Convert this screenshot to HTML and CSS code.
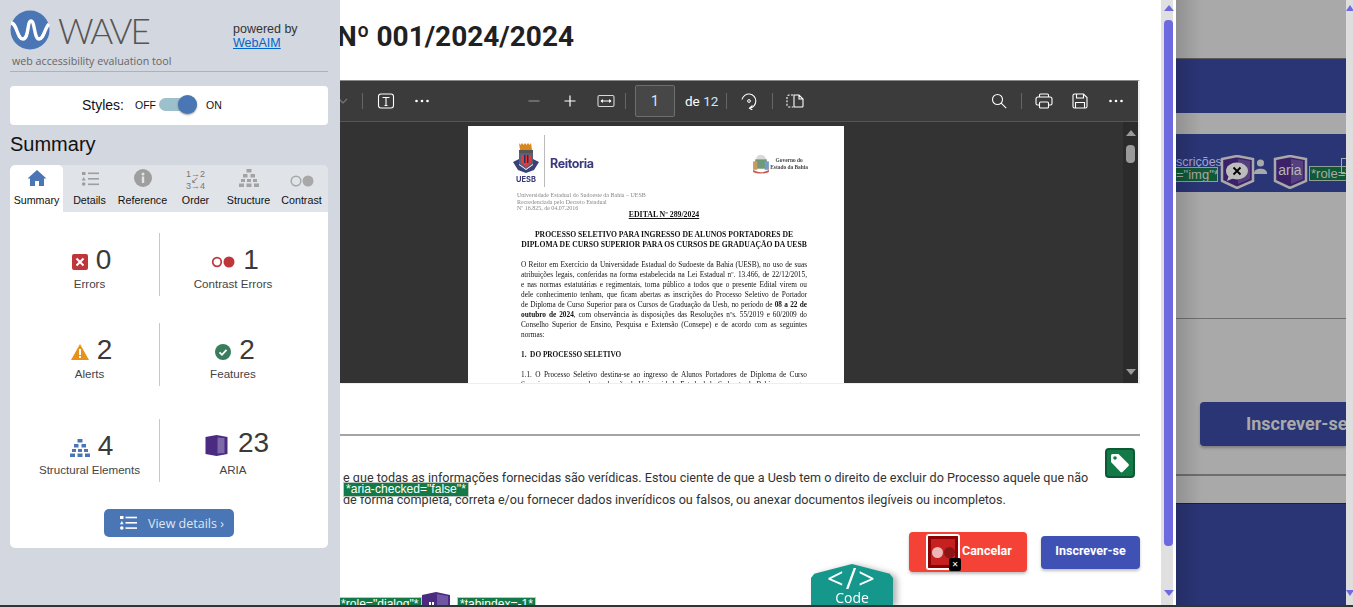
FILE: index.html
```html
<!DOCTYPE html>
<html lang="pt-BR">
<head>
  <meta charset="UTF-8" />
  <meta name="viewport" content="width=device-width, initial-scale=1.0" />
  <title>Edital - WAVE</title>
  <link rel="stylesheet" href="styles.css">
</head>
<body>
<div class="screen">

  <!-- page dialog, runs under the wave sidebar -->
  <main class="dialog">
    <h1 class="title">Nº 001/2024/2024</h1>

    <section class="viewer">
      <div class="pdf-bar">
        <svg class="ico chevron" width="10" height="10" viewBox="0 0 10 10"><path d="M1 3l4 4 4-4" fill="none" stroke="#777" stroke-width="1.2"/></svg>
        <span class="bar-sep sep-a"></span>
        <svg class="ico ico-text" width="18" height="18" viewBox="0 0 18 18"><rect x="1.5" y="2" width="15" height="14" rx="2.5" fill="none" stroke="#fff" stroke-width="1.1"/><path d="M5.5 5.5h7M9 5.5v8M7.5 13.5h3" fill="none" stroke="#fff" stroke-width="1.1"/></svg>
        <svg class="ico ico-more" width="16" height="4" viewBox="0 0 16 4"><circle cx="2.5" cy="2" r="1.3" fill="#fff"/><circle cx="8" cy="2" r="1.3" fill="#fff"/><circle cx="13.5" cy="2" r="1.3" fill="#fff"/></svg>

        <svg class="ico ico-minus" width="14" height="14" viewBox="0 0 14 14"><path d="M1.5 7h11" stroke="#8d8d8d" stroke-width="1.2"/></svg>
        <svg class="ico ico-plus" width="14" height="14" viewBox="0 0 14 14"><path d="M1.5 7h11M7 1.5v11" stroke="#fff" stroke-width="1.2"/></svg>
        <svg class="ico ico-fit" width="18" height="14" viewBox="0 0 18 14"><rect x="1" y="1.5" width="16" height="11" rx="1.5" fill="none" stroke="#d8d8d8" stroke-width="1.1"/><path d="M4 7h10" stroke="#fff" stroke-width="1"/><path d="M3.5 7l2.4-2v4zM14.5 7l-2.4-2v4z" fill="#fff"/></svg>
        <span class="bar-sep sep-b"></span>
        <span class="page-box">1</span>
        <span class="page-total">de <span class="page-num">12</span></span>
        <span class="bar-sep sep-c"></span>
        <svg class="ico ico-rotate" width="18" height="18" viewBox="0 0 18 18"><path d="M2 7.5A7 7 0 1 1 9.5 16" fill="none" stroke="#fff" stroke-width="1.1"/><path d="M12.5 13.5l-3 2.6 2.8 1.9" fill="none" stroke="#fff" stroke-width="1.1"/><circle cx="9" cy="9" r="1.4" fill="none" stroke="#fff"/></svg>
        <span class="bar-sep sep-d"></span>
        <svg class="ico ico-split" width="18" height="14" viewBox="0 0 18 14"><path d="M7 1H3a2 2 0 0 0-2 2v8a2 2 0 0 0 2 2h4" fill="none" stroke="#fff" stroke-width="1.1" stroke-dasharray="2 1.4"/><path d="M8 1h5l4 4v7a1 1 0 0 1-1 1H8zM13 1v4h4" fill="none" stroke="#fff" stroke-width="1.1"/></svg>

        <svg class="ico ico-search" width="16" height="16" viewBox="0 0 16 16"><circle cx="6.5" cy="6.5" r="5" fill="none" stroke="#fff" stroke-width="1.1"/><path d="M10.2 10.2l5 5" stroke="#fff" stroke-width="1.1"/></svg>
        <span class="bar-sep sep-e"></span>
        <svg class="ico ico-print" width="18" height="16" viewBox="0 0 18 16"><path d="M4.5 4V2a1 1 0 0 1 1-1h7a1 1 0 0 1 1 1v2" fill="none" stroke="#fff" stroke-width="1.1"/><path d="M4.5 12h-2A1.5 1.5 0 0 1 1 10.5V6a2 2 0 0 1 2-2h12a2 2 0 0 1 2 2v4.5a1.5 1.5 0 0 1-1.5 1.5h-2" fill="none" stroke="#fff" stroke-width="1.1"/><rect x="4.5" y="9" width="9" height="6" rx="1" fill="none" stroke="#fff" stroke-width="1.1"/></svg>
        <svg class="ico ico-save" width="16" height="16" viewBox="0 0 16 16"><path d="M1 2.5A1.5 1.5 0 0 1 2.5 1h9L15 4.5v9a1.5 1.5 0 0 1-1.5 1.5h-11A1.5 1.5 0 0 1 1 13.5z" fill="none" stroke="#fff" stroke-width="1.1"/><path d="M4.5 1v4h7V1M3.5 15V9.5h9V15" fill="none" stroke="#fff" stroke-width="1.1"/></svg>
        <svg class="ico ico-more-r" width="16" height="4" viewBox="0 0 16 4"><circle cx="2.5" cy="2" r="1.3" fill="#fff"/><circle cx="8" cy="2" r="1.3" fill="#fff"/><circle cx="13.5" cy="2" r="1.3" fill="#fff"/></svg>
      </div>

      <div class="pdf-body">
        <article class="pdf-page">
          <header class="doc-head">
            <div class="crest-col">
              <svg width="26" height="34" viewBox="0 0 26 32">
                <path d="M6 1l1.5 2L9 1l1.5 2L12 1l1.5 2L15 1l1.5 2L18 1l1 7H7z" fill="#d9861f"/>
                <rect x="6" y="8" width="14" height="3" fill="#555"/>
                <path d="M6 11h14v11l-7 5-7-5z" fill="#5a5f7a"/>
                <path d="M8 13h10v8l-5 4-5-4z" fill="#e03a3a"/>
                <path d="M11 13h1.5v8H11zM14 13h1.5v8H14z" fill="#26305f"/>
                <path d="M0 20l6-3v6l7 5 7-5v-6l6 3-5 8-8 3-8-3z" fill="#39407a"/>
              </svg>
              <span class="uesb">UESB</span>
            </div>
            <span class="doc-sep"></span>
            <span class="reitoria">Reitoria</span>
            <div class="gov">
              <svg width="18" height="20" viewBox="0 0 17 19">
                <path d="M8 1c4 0 5 2 5 4H4c0-2 1-4 4-4z" fill="#d9d9d9"/>
                <rect x="3" y="5" width="11" height="9" fill="#6f9a7a"/>
                <rect x="1" y="7" width="4" height="8" fill="#c99a5a"/>
                <rect x="12" y="7" width="4" height="8" fill="#7a9ac0"/>
                <path d="M1 15c4 3 11 3 15 0v2c-4 2-11 2-15 0z" fill="#c25a4e"/>
              </svg>
              <span class="gov-name">Governo do<br>Estado da Bahia</span>
            </div>
          </header>
          <p class="doc-grey">Universidade Estadual do Sudoeste da Bahia – UESB<br>Recredenciada pelo Decreto Estadual<br>Nº 16.825, de 04.07.2016</p>
          <p class="doc-edital">EDITAL Nº 289/2024</p>
          <p class="doc-caption">PROCESSO SELETIVO PARA INGRESSO DE ALUNOS PORTADORES DE<br>DIPLOMA DE CURSO SUPERIOR PARA OS CURSOS DE GRADUAÇÃO DA UESB</p>
          <div class="doc-text">
            <p class="just">O Reitor em Exercício da Universidade Estadual do Sudoeste da Bahia (UESB), no uso de suas</p>
            <p class="just">atribuições legais, conferidas na forma estabelecida na Lei Estadual nº. 13.466, de 22/12/2015,</p>
            <p class="just">e nas normas estatutárias e regimentais, torna público a todos que o presente Edital virem ou</p>
            <p class="just">dele conhecimento tenham, que ficam abertas as inscrições do Processo Seletivo de Portador</p>
            <p class="just">de Diploma de Curso Superior para os Cursos de Graduação da Uesb, no período de <b>08 a 22 de</b></p>
            <p class="just"><b>outubro de 2024</b>, com observância às disposições das Resoluções nºs. 55/2019 e 60/2009 do</p>
            <p class="just">Conselho Superior de Ensino, Pesquisa e Extensão (Consepe) e de acordo com as seguintes</p>
            <p>normas:</p>
            <p class="doc-section"><b>1.&nbsp; DO PROCESSO SELETIVO</b></p>
            <p class="just">1.1. O Processo Seletivo destina-se ao ingresso de Alunos Portadores de Diploma de Curso</p>
            <p class="just">Superior, para cursos de graduação da Universidade Estadual do Sudoeste da Bahia, nas vagas</p>
          </div>
        </article>
        <div class="pdf-scroll">
          <span class="pdf-arrow-up"></span>
          <span class="pdf-thumb"></span>
          <span class="pdf-arrow-down"></span>
        </div>
      </div>
    </section>

    <hr class="rule">

    <div class="terms">
      <p>e que todas as informações fornecidas são verídicas. Estou ciente de que a Uesb tem o direito de excluir do Processo aquele que não</p>
      <p>de forma completa, correta e/ou fornecer dados inverídicos ou falsos, ou anexar documentos ilegíveis ou incompletos.</p>
      <span class="badge badge-aria">*aria-checked="false"*</span>
      <svg class="tag-icon" width="30" height="30" viewBox="0 0 30 30">
        <rect x="1" y="1" width="28" height="28" rx="3" fill="#137a47" stroke="#0c5a34" stroke-width="2"/>
        <path d="M6 7.5A1.5 1.5 0 0 1 7.5 6h6l10 10a1.5 1.5 0 0 1 0 2l-6 6a1.5 1.5 0 0 1-2 0L6 14z" fill="#fff"/>
        <circle cx="10" cy="10" r="1.8" fill="#137a47"/>
      </svg>
    </div>

    <div class="actions">
      <button class="btn btn-cancel">
        <span class="contrast-flag">
          <span class="dot-light"></span><span class="dot-dark"></span>
          <span class="flag-x">✕</span>
        </span>
        <span class="btn-text">Cancelar</span>
      </button>
      <button class="btn btn-send">Inscrever-se</button>
    </div>

    <span class="badge badge-role">*role="dialog"*</span>
    <svg class="aria-mini" width="30" height="16" viewBox="0 0 30 16">
      <path d="M1 3l14-3 14 3v13H1z" fill="#4b2a82"/>
      <path d="M16 2l11 2v12H16z" fill="#6f56a3"/>
      <path d="M9 10v6M12 10v6" stroke="#fff" stroke-width="2"/>
    </svg>
    <span class="badge badge-tab">*tabindex=-1*</span>

    <div class="code-tab">
      <div class="code-shape">
        <span class="code-mark">&lt;/&gt;</span>
        <span class="code-word">Code</span>
      </div>
    </div>
  </main>

  <div class="dialog-scroll">
    <span class="arrow-up"></span>
    <span class="dialog-thumb"></span>
    <span class="arrow-down"></span>
  </div>

  <!-- dimmed page behind the dialog -->
  <div class="backdrop">
    <div class="band-grey band-top"></div>
    <div class="band-blue band-one"></div>
    <div class="band-grey band-gap"></div>
    <div class="band-blue band-two">
      <div class="img-stack">
        <span class="inscr">scrições</span>
        <span class="badge-dim badge-img">="img"*</span>
      </div>
      <svg class="shield" width="35" height="34" viewBox="0 0 35 34">
        <path d="M2 4l15-3 16 3v22l-16 7-15-7z" fill="#3a2168" stroke="#a9a9a9" stroke-width="2.5"/>
        <path d="M18 4l12 2v18l-12 5z" fill="#54407f"/>
        <ellipse cx="17" cy="16" rx="11" ry="8.5" fill="#bdbdbd"/>
        <path d="M9 20l-2 6 7-3z" fill="#bdbdbd"/>
        <path d="M13.5 12.5l7 7M20.5 12.5l-7 7" stroke="#000" stroke-width="1.8"/>
      </svg>
      <svg class="person" width="15" height="16" viewBox="0 0 15 18"><circle cx="7.5" cy="4.5" r="4" fill="#a9a9a9"/><path d="M0 17c0-4 3-6 7.5-6s7.5 2 7.5 6z" fill="#a9a9a9"/></svg>
      <svg class="shield aria-shield" width="35" height="34" viewBox="0 0 35 34">
        <path d="M2 4l15-3 16 3v22l-16 7-15-7z" fill="#3a2168" stroke="#a9a9a9" stroke-width="2.5"/>
        <path d="M18 4l12 2v18l-12 5z" fill="#54407f"/>
        <text x="17" y="20" text-anchor="middle" class="aria-word">aria</text>
      </svg>
      <span class="badge-dim badge-role-dim">*role="</span>
      <span class="dim-box"></span>
    </div>
    <div class="band-grey band-mid"></div>
    <div class="band-grey band-low">
      <div class="dim-btn">Inscrever-se</div>
    </div>
    <div class="band-grey band-foot"></div>
    <div class="band-blue band-end"></div>
  </div>

  <div class="page-scroll">
    <span class="arrow-up small"></span>
    <span class="arrow-down small"></span>
  </div>

  <!-- wave sidebar -->
  <aside class="wave">
    <header class="wave-head">
      <div class="wave-brand">
        <div class="wave-logo">
          <svg width="40" height="40" viewBox="0 0 40 40">
            <circle cx="20" cy="20" r="19.5" fill="#4a76b5"/>
            <path d="M1 13c6 0 6 16 12 16s4-18 8-18 3 18 8 18 6-12 10-15" fill="none" stroke="#fff" stroke-width="3.4"/>
          </svg>
          <span class="wave-name">WAVE</span>
        </div>
        <div class="wave-tag">web accessibility evaluation tool</div>
      </div>
      <div class="wave-powered">powered by<br><a href="#">WebAIM</a></div>
    </header>

    <div class="styles-card">
      <span class="styles-label">Styles:</span>
      <span class="styles-opt">OFF</span>
      <span class="toggle"><span class="knob"></span></span>
      <span class="styles-opt">ON</span>
    </div>

    <h2 class="wave-title">Summary</h2>

    <nav class="tabs">
      <div class="tab tab-active">
        <svg width="20" height="18" viewBox="0 0 20 18"><path d="M10 1L.5 9.5H3V17h5v-5h4v5h5V9.5h2.500z" fill="#4a76b5"/></svg>
        <span>Summary</span>
      </div>
      <div class="tab">
        <svg width="18" height="16" viewBox="0 0 18 16"><g fill="#9e9e9e"><rect x="1" y="1" width="3.5" height="3"/><path d="M2.7 6l2 3.4h-4z"/><circle cx="2.7" cy="13" r="1.8"/><rect x="7" y="1.5" width="11" height="1.6"/><rect x="7" y="7" width="11" height="1.6"/><rect x="7" y="12.5" width="11" height="1.6"/></g></svg>
        <span>Details</span>
      </div>
      <div class="tab">
        <svg width="18" height="18" viewBox="0 0 18 18"><circle cx="9" cy="9" r="9" fill="#9e9e9e"/><rect x="7.8" y="7.5" width="2.4" height="6.5" fill="#e0e3e8"/><circle cx="9" cy="5" r="1.5" fill="#e0e3e8"/></svg>
        <span>Reference</span>
      </div>
      <div class="tab">
        <span class="order-mark">1→2<br>↙<br>3→4</span>
        <span>Order</span>
      </div>
      <div class="tab">
        <svg width="20" height="18" viewBox="0 0 20 18"><use href="#tree" fill="#a3a3a3"/></svg>
        <span>Structure</span>
      </div>
      <div class="tab">
        <svg width="24" height="12" viewBox="0 0 24 12"><circle cx="6" cy="6" r="4.8" fill="none" stroke="#a8a8a8" stroke-width="1.5"/><circle cx="18" cy="6" r="5.5" fill="#a8a8a8"/></svg>
        <span>Contrast</span>
      </div>
    </nav>

    <div class="panel">
      <div class="stat-row row-one">
        <div class="stat">
          <div class="stat-top">
            <svg width="16" height="16" viewBox="0 0 16 16"><rect width="16" height="16" rx="2" fill="#c0353a"/><path d="M4.5 4.5l7 7M11.5 4.5l-7 7" stroke="#fff" stroke-width="2"/></svg>
            <span class="stat-num">0</span>
          </div>
          <div class="stat-label">Errors</div>
        </div>
        <div class="stat stat-right">
          <div class="stat-top">
            <svg width="24" height="12" viewBox="0 0 24 12"><circle cx="6" cy="6" r="4.3" fill="none" stroke="#c0353a" stroke-width="1.7"/><circle cx="18" cy="6" r="5.5" fill="#c0353a"/></svg>
            <span class="stat-num">1</span>
          </div>
          <div class="stat-label">Contrast Errors</div>
        </div>
      </div>

      <div class="stat-row row-two">
        <div class="stat">
          <div class="stat-top">
            <svg width="18" height="16" viewBox="0 0 18 16"><path d="M9 0l9 16H0z" fill="#e8921a"/><rect x="8" y="5" width="2" height="6" fill="#fff"/><rect x="8" y="12" width="2" height="2" fill="#fff"/></svg>
            <span class="stat-num">2</span>
          </div>
          <div class="stat-label">Alerts</div>
        </div>
        <div class="stat stat-right">
          <div class="stat-top">
            <svg width="16" height="16" viewBox="0 0 16 16"><circle cx="8" cy="8" r="8" fill="#3a7d5c"/><path d="M4.5 8.3L7 10.800l4.500-5" fill="none" stroke="#fff" stroke-width="1.8"/></svg>
            <span class="stat-num">2</span>
          </div>
          <div class="stat-label">Features</div>
        </div>
      </div>

      <div class="stat-row row-three">
        <div class="stat">
          <div class="stat-top">
            <svg width="20" height="18" viewBox="0 0 20 18"><use href="#tree" fill="#4a76b5"/></svg>
            <span class="stat-num">4</span>
          </div>
          <div class="stat-label">Structural Elements</div>
        </div>
        <div class="stat stat-right">
          <div class="stat-top stat-top-aria">
            <svg width="23" height="21" viewBox="0 0 22 21"><path d="M0 2l11-2 11 2v17l-11 2-11-2z" fill="#4b2a82"/><path d="M12 2.5l7 .5v15l-7 .5z" fill="#7d68a8"/></svg>
            <span class="stat-num">23</span>
          </div>
          <div class="stat-label">ARIA</div>
        </div>
      </div>

      <button class="view-btn">
        <svg width="17" height="14" viewBox="0 0 17 14"><g fill="#fff"><rect x="0" y="0" width="3.5" height="3"/><path d="M1.8 5l1.8 3.2H0z"/><circle cx="1.8" cy="12" r="1.8"/><rect x="5.5" y="0.7" width="11.5" height="1.6"/><rect x="5.5" y="6" width="11.5" height="1.6"/><rect x="5.5" y="11.3" width="11.5" height="1.6"/></g></svg>
        <span>View details ›</span>
      </button>
    </div>
  </aside>
</div>

<svg class="defs" width="0" height="0">
  <symbol id="tree" viewBox="0 0 20 18">
    <rect x="7.5" y="0" width="5" height="3.5"/>
    <rect x="4" y="5" width="4.5" height="3.5"/><rect x="11.5" y="5" width="4.5" height="3.5"/>
    <rect x="2" y="10" width="4" height="3"/><rect x="8" y="10" width="4" height="3"/><rect x="14" y="10" width="4" height="3"/>
    <rect x="0" y="14.5" width="5" height="3.5"/><rect x="7.5" y="14.5" width="5" height="3.5"/><rect x="15" y="14.5" width="5" height="3.5"/>
  </symbol>
</svg>
</body>
</html>
```

FILE: styles.css
```css
* {
  box-sizing: border-box;
}

html, body {
  margin: 0;
  height: 100%;
  overflow: hidden;
  background: #333;
}

p {
  margin: 0;
}

.defs {
  position: absolute;
}

.screen {
  position: relative;
  display: flex;
  width: 1353px;
  height: 605px;
  overflow: hidden;
  font-family: Roboto, sans-serif;
  color: #333;
}

/* dialog */
.dialog {
  position: relative;
  flex: none;
  width: 1161px;
  background: #fff;
  overflow: hidden;
}

.title {
  margin: 0 0 0 337px;
  height: 80px;
  font: 700 28px/74px Roboto, sans-serif;
  color: #212121;
}

.viewer {
  width: 1140px;
  height: 304px;
  border-top: 1px solid #8a8a8a;
  border-right: 2px solid #eee;
  border-bottom: 1px solid #eee;
}

.pdf-bar {
  display: flex;
  align-items: center;
  height: 41px;
  background: #3b3b3b;
  border-bottom: 1px solid #555;
  color: #fff;
}

.ico {
  flex: none;
  margin-left: 17px;
}

.chevron { margin-left: 338px; }
.ico-text { margin-left: 14px; }
.ico-more { margin-left: 19px; }
.ico-minus { margin-left: 97px; }
.ico-plus { margin-left: 22px; }
.ico-fit { margin-left: 20px; }
.ico-rotate { margin-left: 13px; }
.ico-split { margin-left: 13px; }
.ico-search { margin-left: 187px; }
.ico-print { margin-left: 13px; }
.ico-save { margin-left: 19px; }
.ico-more-r { margin-left: 20px; }

.bar-sep {
  flex: none;
  width: 1px;
  height: 16px;
  margin-left: 14px;
  background: #666;
}

.sep-a { margin-left: 14px; }
.sep-b { margin-left: 10px; }
.sep-c { margin-left: 8px; }
.sep-e { margin-left: 14px; }

.page-box {
  flex: none;
  width: 40px;
  height: 32px;
  margin-left: 9px;
  border: 1px solid #6e6e6e;
  border-radius: 2px;
  background: #474747;
  font-size: 14px;
  line-height: 30px;
  text-align: center;
  color: #d6e9ff;
}

.page-total {
  flex: none;
  margin-left: 10px;
  font-size: 13.5px;
}

.page-num {
  color: #cfe6ff;
}

.pdf-body {
  display: flex;
  height: 261px;
  background: #333;
  overflow: hidden;
}

.pdf-page {
  flex: none;
  width: 376px;
  height: 300px;
  margin: 4px 279px 0 468px;
  padding: 9px 37px 0 53px;
  background: #fff;
  color: #111;
  font-family: "Liberation Serif", serif;
  filter: blur(0.25px);
}

.doc-head {
  display: flex;
  align-items: center;
  height: 52px;
  margin-left: -8px;
}

.crest-col {
  display: flex;
  flex-direction: column;
  align-items: center;
  width: 30px;
  margin-left: -2px;
  margin-right: 2px;
  padding-top: 3px;
}

.uesb {
  font: 700 7.5px/9px Inter, sans-serif;
  color: #3a3a7c;
}

.doc-sep {
  width: 1px;
  height: 52px;
  margin-left: 1px;
  background: #bbb;
}

.reitoria {
  margin: 4px 0 0 5px;
  font: 700 12.5px Inter, sans-serif;
  letter-spacing: -0.4px;
  color: #3a3a7c;
}

.gov {
  display: flex;
  align-items: center;
  margin: 5px -1px 0 auto;
}

.gov-name {
  font: 700 5.4px/7px "Liberation Serif", serif;
  color: #444;
  text-align: center;
}

.doc-grey {
  margin: 5px 0 0 -4px;
  font-size: 6px;
  line-height: 6.5px;
  color: #888;
}

.doc-edital {
  margin-top: -2px;
  font-size: 7.8px;
  line-height: 10px;
  font-weight: 700;
  text-align: center;
  text-decoration: underline;
}

.doc-caption {
  margin: 10px -30px 0;
  font-size: 7.65px;
  line-height: 10px;
  font-weight: 700;
  text-align: center;
  white-space: nowrap;
}

.doc-text {
  margin-top: 10px;
  font-size: 7.3px;
  line-height: 10px;
}

.just {
  text-align: justify;
  text-align-last: justify;
}

.doc-section {
  margin: 10px 0;
}

.pdf-scroll {
  position: relative;
  flex: none;
  width: 15px;
  background: #2b2b2b;
}

.pdf-thumb {
  position: absolute;
  top: 23px;
  left: 3px;
  width: 9px;
  height: 18px;
  border-radius: 4px;
  background: #9a9a9a;
}

.pdf-arrow-up,
.pdf-arrow-down {
  position: absolute;
  left: 3px;
  border-left: 5px solid transparent;
  border-right: 5px solid transparent;
}

.pdf-arrow-up {
  top: 8px;
  border-bottom: 6px solid #9a9a9a;
}

.pdf-arrow-down {
  bottom: 8px;
  border-top: 6px solid #9a9a9a;
}

.rule {
  width: 1140px;
  height: 2px;
  margin: 50px 0 0;
  border: 0;
  background: #a5a5a5;
}

.terms {
  position: relative;
  margin-top: 31px;
  padding-left: 343px;
  font-size: 12.6px;
  line-height: 22px;
  white-space: nowrap;
}

.badge {
  position: absolute;
  padding: 0 2px;
  background: #137a47;
  border: 1px solid #b9c9bf;
  color: #fff;
  font: 12.1px/13px "Liberation Sans", Arial, sans-serif;
  white-space: nowrap;
}

.badge-aria {
  top: 15px;
  left: 343px;
}

.tag-icon {
  position: absolute;
  top: -19px;
  left: 1105px;
}

.actions {
  display: flex;
  align-items: center;
  justify-content: flex-end;
  gap: 14px;
  width: 1140px;
  margin-top: 21px;
}

.btn {
  border: 0;
  border-radius: 4px;
  color: #fff;
  font: 700 12.5px Roboto, sans-serif;
  box-shadow: 0 2px 3px rgba(0, 0, 0, 0.25);
}

.btn-cancel {
  display: flex;
  align-items: center;
  gap: 2px;
  width: 118px;
  height: 40px;
  padding: 0 0 0 17px;
  background: #f44336;
}

.btn-text {
  margin-bottom: 4px;
}

.btn-send {
  width: 99px;
  height: 33px;
  padding: 0 0 3px;
  background: #3f51b5;
}

.contrast-flag {
  position: relative;
  display: flex;
  align-items: center;
  justify-content: center;
  gap: 1px;
  width: 34px;
  height: 36px;
  border: 2px solid #fff;
  border-radius: 3px;
  outline: 3px solid #8b0000;
  outline-offset: -5px;
  background: #c62020;
}

.dot-light,
.dot-dark {
  flex: none;
  width: 11px;
  height: 11px;
  border-radius: 50%;
}

.dot-light { background: #f0b5b5; }
.dot-dark { background: #8f1414; }

.flag-x {
  position: absolute;
  right: -3px;
  bottom: -3px;
  width: 12px;
  height: 13px;
  border-radius: 2px;
  background: #000;
  font: 700 8px/13px "DejaVu Sans", sans-serif;
  text-align: center;
}

.badge-role {
  top: 597px;
  left: 338px;
}

.badge-tab {
  top: 597px;
  left: 457px;
}

.aria-mini {
  position: absolute;
  top: 592px;
  left: 421px;
}

.code-tab {
  position: absolute;
  top: 564px;
  left: 811px;
  filter: drop-shadow(4px 1px 3px rgba(0, 0, 0, 0.3));
}

.code-shape {
  display: flex;
  flex-direction: column;
  align-items: center;
  width: 82px;
  height: 41px;
  background: #16978c;
  clip-path: polygon(0 34%, 4% 24%, 50% 0, 96% 24%, 100% 34%, 100% 100%, 0 100%);
  color: #fff;
}

.code-mark {
  font: 29px/27px "Open Sans", sans-serif;
  letter-spacing: 2px;
}

.code-word {
  font: 14px/13px "Open Sans", sans-serif;
}

/* scrollbars */
.dialog-scroll {
  position: relative;
  flex: none;
  width: 15px;
  background: linear-gradient(to right, #e0e0e0 12px, #fff 12px);
}

.dialog-thumb {
  position: absolute;
  top: 20px;
  left: 3px;
  width: 9px;
  height: 526px;
  border-radius: 4px;
  background: #6d6ae0;
}

.arrow-up,
.arrow-down {
  position: absolute;
  left: 3px;
  border-left: 5px solid transparent;
  border-right: 5px solid transparent;
}

.arrow-up {
  top: 5px;
  border-bottom: 6px solid #6d6ae0;
}

.arrow-down {
  bottom: 9px;
  border-top: 6px solid #6d6ae0;
}

.small {
  left: 0;
  border-left-width: 4px;
  border-right-width: 4px;
}

/* dimmed page */
.backdrop {
  position: relative;
  flex: none;
  width: 170px;
  background: #a9a9a9;
}

.backdrop::after {
  content: "";
  position: absolute;
  inset: 0 auto 0 0;
  width: 26px;
  background: linear-gradient(to right, rgba(0, 0, 0, 0.14), transparent);
}

.band-top { height: 59px; border-bottom: 1px solid #5c5c5c; }
.band-one { height: 54px; }
.band-gap { height: 21px; }
.band-mid { height: 127px; border-bottom: 1px solid #6e6e6e; }
.band-foot { height: 27px; }
.band-end { height: 102px; border-top: 1px solid #222; }

.band-blue {
  background: #2a3576;
}

.band-low {
  height: 157px;
  padding: 83px 0 0 24px;
  border-bottom: 2px solid #6e6e6e;
}

.band-two {
  display: flex;
  align-items: flex-start;
  height: 58px;
  overflow: hidden;
  color: #a9a9a9;
}

.img-stack {
  display: flex;
  flex: none;
  flex-direction: column;
  width: 44px;
  margin-top: 23px;
  font: 12.5px/10px "Liberation Sans", Arial, sans-serif;
}

.inscr {
  color: #a5a5cc;
  white-space: nowrap;
}

.badge-dim {
  flex: none;
  height: 15px;
  background: #0f5a36;
  border: 1px solid #8f9f95;
  font: 13px/13px "Liberation Sans", Arial, sans-serif;
  white-space: nowrap;
}

.badge-img {
  width: 42px;
  border-left: 0;
  overflow: hidden;
}

.shield { flex: none; margin-top: 21px; }
.person { flex: none; margin: 25px 0 0 -2px; }
.aria-shield { margin-left: 5px; }
.aria-word { font: 14px "Liberation Sans", Arial, sans-serif; fill: #b5b5b5; }

.badge-role-dim {
  margin: 32px 0 0 1px;
  padding-left: 1px;
  width: 38px;
  overflow: hidden;
}

.dim-box {
  flex: none;
  width: 10px;
  height: 16px;
  margin: 24px 0 0 -6px;
  border: 1px solid #a9a9a9;
}

.dim-btn {
  height: 44px;
  padding-left: 46px;
  border-radius: 4px 0 0 4px;
  background: #2a3576;
  box-shadow: 0 2px 3px rgba(0, 0, 0, 0.25);
  color: #a9a9a9;
  font: 700 18px/44px Roboto, sans-serif;
  overflow: hidden;
  white-space: nowrap;
}

.page-scroll {
  position: relative;
  flex: 1;
  background: #dedede;
}

/* wave sidebar */
.wave {
  position: absolute;
  top: 0;
  left: 0;
  width: 340px;
  height: 605px;
  padding: 0 12px 0 10px;
  background: #d3d7df;
  font-family: "Liberation Sans", Arial, sans-serif;
  color: #111;
}

.wave-head {
  display: flex;
  height: 72px;
  border-bottom: 1px solid #aeb2b8;
}

.wave-brand {
  width: 223px;
  padding-top: 10px;
}

.wave-logo {
  display: flex;
  align-items: center;
  height: 40px;
}

.wave-name {
  margin-left: 8px;
  font: 300 35px/40px Lato, sans-serif;
  color: #555;
  letter-spacing: -2px;
}

.wave-tag {
  margin: 3px 0 0 2px;
  font: 10.7px/16px "Open Sans", sans-serif;
  color: #666;
}

.wave-powered {
  padding-top: 22px;
  font-size: 12.5px;
  line-height: 14px;
  color: #333;
}

.wave-powered a {
  color: #0066cc;
}

.styles-card {
  display: flex;
  align-items: center;
  height: 39px;
  margin-top: 14px;
  padding: 0 0 2px 72px;
  border-radius: 4px;
  background: #fff;
}

.styles-label {
  margin-right: 11px;
  font-size: 14px;
}

.styles-opt {
  font-size: 10.5px;
}

.toggle {
  position: relative;
  width: 38px;
  height: 13px;
  margin: 0 9px 0 3px;
  border-radius: 7px;
  background: #9dc1cc;
}

.knob {
  position: absolute;
  top: -3px;
  right: 0;
  width: 19px;
  height: 19px;
  border-radius: 50%;
  background: #4a76b5;
  box-shadow: 0 1px 2px rgba(0, 0, 0, 0.4);
}

.wave-title {
  margin: 8px 0 9px;
  font-size: 20px;
  line-height: 23px;
  font-weight: 400;
}

.tabs {
  display: flex;
  height: 47px;
  border-radius: 5px 5px 0 0;
  background: #e0e3e8;
  overflow: hidden;
}

.tab {
  display: flex;
  flex: 1;
  flex-direction: column;
  align-items: center;
  justify-content: flex-end;
  padding-bottom: 5px;
  font-size: 10.7px;
  line-height: 13px;
  white-space: nowrap;
}

.tab svg {
  margin-bottom: 7px;
}

.tab-active {
  background: #fff;
  border-radius: 5px 5px 0 0;
}

.order-mark {
  margin-bottom: 5px;
  font-size: 9px;
  line-height: 6px;
  color: #777;
  text-align: center;
}

.panel {
  display: flex;
  flex-direction: column;
  height: 336px;
  border-radius: 0 0 5px 5px;
  background: #fff;
}

.stat-row {
  display: flex;
  height: 63px;
  margin-left: 10px;
}

.row-one { margin-top: 21px; }
.row-two { margin-top: 27px; }
.row-three { margin-top: 33px; }

.stat {
  display: flex;
  flex-direction: column;
  align-items: center;
  width: 139px;
}

.stat-right {
  width: 147px;
  border-left: 1px solid #c8c8c8;
}

.stat-top {
  display: flex;
  align-items: center;
  gap: 8px;
  height: 39px;
  padding: 15px 0 0 4px;
}

.stat-top svg {
  margin-top: 4px;
}

.stat-top-aria {
  gap: 10px;
  padding: 9px 0 0 8px;
}

.stat-num {
  font-size: 28px;
  line-height: 34px;
  color: #3a3a3a;
}

.stat-label {
  margin-top: 4px;
  font-size: 11.6px;
  line-height: 15px;
  color: #444;
}

.view-btn {
  display: flex;
  align-items: center;
  gap: 11px;
  align-self: center;
  width: 130px;
  height: 28px;
  margin-top: 27px;
  padding: 0 0 0 16px;
  border: 0;
  border-radius: 5px;
  background: #4a76b5;
  color: #dfe7f2;
  font: 12.5px "Open Sans", sans-serif;
}
```
